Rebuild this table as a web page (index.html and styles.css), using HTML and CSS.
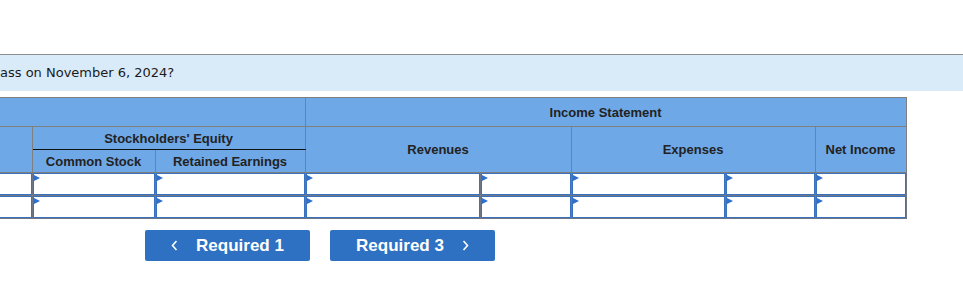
FILE: index.html
```html
<!DOCTYPE html>
<html lang="en">
<head>
<meta charset="utf-8">
<title>Worksheet</title>
<link rel="stylesheet" href="styles.css">
</head>
<body>
<div class="rule"></div>
<div class="question">ass on November 6, 2024?</div>

<table class="sheet">
  <colgroup>
    <col class="c-lead">
    <col class="c-common">
    <col class="c-retained">
    <col class="c-rev-a">
    <col class="c-rev-b">
    <col class="c-exp-a">
    <col class="c-exp-b">
    <col class="c-net">
  </colgroup>
  <thead>
    <tr class="h1">
      <th colspan="3" class="lead"></th>
      <th colspan="5">Income Statement</th>
    </tr>
    <tr class="h2">
      <th rowspan="2" class="lead"></th>
      <th colspan="2" class="group">Stockholders' Equity</th>
      <th colspan="2" rowspan="2">Revenues</th>
      <th colspan="2" rowspan="2">Expenses</th>
      <th rowspan="2">Net Income</th>
    </tr>
    <tr class="h3">
      <th>Common Stock</th>
      <th>Retained Earnings</th>
    </tr>
  </thead>
  <tbody>
    <tr>
      <td class="lead"><div class="field"></div></td>
      <td><div class="field mark"></div></td>
      <td><div class="field mark"></div></td>
      <td><div class="field mark"></div></td>
      <td><div class="field mark"></div></td>
      <td><div class="field mark"></div></td>
      <td><div class="field mark"></div></td>
      <td><div class="field mark"></div></td>
    </tr>
    <tr>
      <td class="lead"><div class="field"></div></td>
      <td><div class="field mark"></div></td>
      <td><div class="field mark"></div></td>
      <td><div class="field mark"></div></td>
      <td><div class="field mark"></div></td>
      <td><div class="field mark"></div></td>
      <td><div class="field mark"></div></td>
      <td><div class="field mark"></div></td>
    </tr>
  </tbody>
</table>

<div class="nav">
  <button class="btn" type="button">
    <svg class="chev" width="7" height="11" viewBox="0 0 7 11"><path d="M5.5 1 L1.5 5.5 L5.5 10" fill="none" stroke="#fff" stroke-width="1.6"/></svg>
    <span>Required 1</span>
  </button>
  <button class="btn" type="button">
    <span>Required 3</span>
    <svg class="chev" width="7" height="11" viewBox="0 0 7 11"><path d="M1.5 1 L5.5 5.5 L1.5 10" fill="none" stroke="#fff" stroke-width="1.6"/></svg>
  </button>
</div>
</body>
</html>
```

FILE: styles.css
```css
html, body {
  margin: 0;
  padding: 0;
  background: #fff;
}

body {
  font-family: "Liberation Sans", Arial, sans-serif;
  color: #222;
}

.rule {
  margin-top: 54px;
  height: 1px;
  background: #8f8f8f;
}

.question {
  height: 36px;
  line-height: 36px;
  background: #d9ebf9;
  font-family: "DejaVu Sans", Verdana, sans-serif;
  font-size: 13px;
  color: #1a1a1a;
  white-space: nowrap;
  margin-bottom: 6px;
}

.sheet {
  border-collapse: collapse;
  table-layout: fixed;
  width: 906px;
}

.c-lead { width: 32px; }
.c-common { width: 123px; }
.c-retained { width: 150px; }
.c-rev-a { width: 175px; }
.c-rev-b { width: 91px; }
.c-exp-a { width: 154px; }
.c-exp-b { width: 90px; }
.c-net { width: 91px; }

.sheet th {
  background: #6fa8e7;
  border: 1px solid #7f7f7f;
  font-size: 13px;
  font-weight: bold;
  color: #222;
  padding: 0;
  text-align: center;
  vertical-align: middle;
}

.sheet .lead {
  border-left: none;
}

.h1 th { height: 28px; }
.h2 th { height: 22px; }
.h3 th { height: 22px; }

.sheet th.group {
  border-bottom: 1px solid #111;
}

.sheet td {
  border: 1px solid #6e7785;
  padding: 0;
  height: 22px;
  background: #fff;
}

.field {
  position: relative;
  box-sizing: border-box;
  height: 22px;
  border: 1px solid #3a72bd;
  background: #fff;
}

.sheet td.lead .field {
  border-left: none;
}

/* small marker in the corner of each editable cell */
.field.mark::before {
  content: "";
  position: absolute;
  top: 1px;
  left: 0;
  width: 0;
  height: 0;
  border-left: 6px solid #2f6fcf;
  border-top: 3px solid transparent;
  border-bottom: 3px solid transparent;
}

.nav {
  display: flex;
  gap: 20px;
  padding-left: 145px;
  margin-top: 11px;
}

.btn {
  display: flex;
  align-items: center;
  justify-content: center;
  gap: 18px;
  width: 165px;
  height: 31px;
  padding: 0;
  border: none;
  border-radius: 2px;
  background: #2e70c1;
  color: #fff;
  font-family: "Liberation Sans", Arial, sans-serif;
  font-size: 17px;
  font-weight: bold;
}

.chev {
  display: block;
}
```
